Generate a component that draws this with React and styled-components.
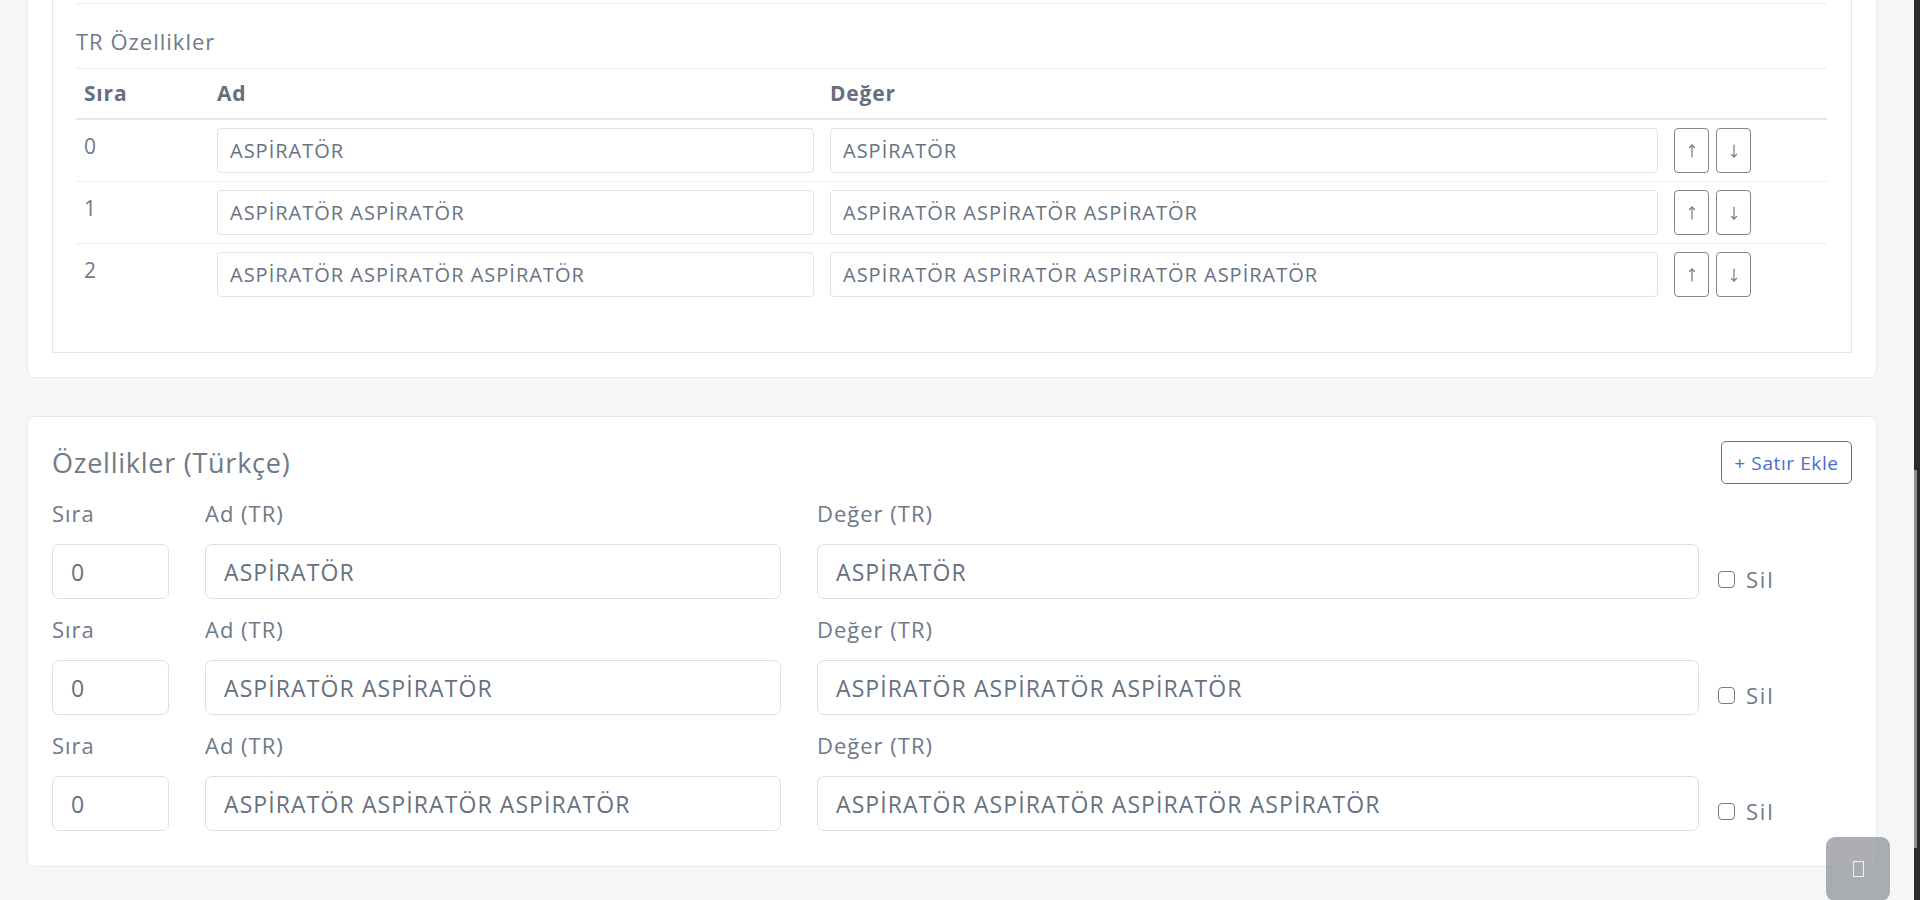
import React from 'react'
import styled, { createGlobalStyle } from 'styled-components'

const topRows = [
  { sira: 0, ad: 'ASPİRATÖR', deger: 'ASPİRATÖR' },
  { sira: 1, ad: 'ASPİRATÖR ASPİRATÖR', deger: 'ASPİRATÖR ASPİRATÖR ASPİRATÖR' },
  { sira: 2, ad: 'ASPİRATÖR ASPİRATÖR ASPİRATÖR', deger: 'ASPİRATÖR ASPİRATÖR ASPİRATÖR ASPİRATÖR' }
]

const trRows = [
  { sira: 0, ad: 'ASPİRATÖR', deger: 'ASPİRATÖR' },
  { sira: 0, ad: 'ASPİRATÖR ASPİRATÖR', deger: 'ASPİRATÖR ASPİRATÖR ASPİRATÖR' },
  { sira: 0, ad: 'ASPİRATÖR ASPİRATÖR ASPİRATÖR', deger: 'ASPİRATÖR ASPİRATÖR ASPİRATÖR ASPİRATÖR' }
]

const font = '"Open Sans", "Noto Sans", sans-serif'

function Arrow ({ down }) {
  return <svg width='10' height='16' viewBox='0 0 10 16' fill='none' stroke='#6f7782' strokeWidth='1.2' strokeLinecap='round'>
    {down
      ? <><line x1='5' y1='2' x2='5' y2='14' /><polyline points='2.5,11.5 5,14 7.5,11.5' /></>
      : <><line x1='5' y1='2' x2='5' y2='14' /><polyline points='2.5,4.5 5,2 7.5,4.5' /></>}
  </svg>
}

export default function App () {
  return <Shell>
    <GlobalStyle />
    <Main>
      <Card $cut>
        <InnerBox>
          <TopRule />
          <Caption>TR Özellikler</Caption>
          <TableHead>
            <Th>Sıra</Th>
            <Th>Ad</Th>
            <Th>Değer</Th>
            <Th />
          </TableHead>
          {topRows.map((r, i) => <TableRow key={i} $last={i === topRows.length - 1}>
            <Td $num>{r.sira}</Td>
            <Td><SmallInput defaultValue={r.ad} /></Td>
            <Td><SmallInput defaultValue={r.deger} /></Td>
            <Td>
              <MoveGroup>
                <MoveButton><Arrow /></MoveButton>
                <MoveButton><Arrow down /></MoveButton>
              </MoveGroup>
            </Td>
          </TableRow>)}
        </InnerBox>
      </Card>

      <Card>
        <CardHeader>
          <Title>Özellikler (Türkçe)</Title>
          <OutlineButton>+ Satır Ekle</OutlineButton>
        </CardHeader>
        <FieldRows>
          {trRows.map((r, i) => <FieldRow key={i}>
            <Field>
              <Label>Sıra</Label>
              <BigInput defaultValue={r.sira} />
            </Field>
            <Field>
              <Label>Ad (TR)</Label>
              <BigInput defaultValue={r.ad} />
            </Field>
            <Field>
              <Label>Değer (TR)</Label>
              <BigInput defaultValue={r.deger} />
            </Field>
            <CheckLine>
              <Check type='checkbox' />
              <span>Sil</span>
            </CheckLine>
          </FieldRow>)}
        </FieldRows>
      </Card>
    </Main>
    <ScrollTrack>
      <ScrollThumb />
    </ScrollTrack>
    <BackTop><Tofu /></BackTop>
  </Shell>
}

const GlobalStyle = createGlobalStyle`
  html, body {
    margin: 0;
    padding: 0;
    height: 100%;
    overflow: hidden;
  }
  body {
    background: #f5f6f8;
    font-family: ${font};
    color: #6c7786;
  }
  #root { height: 100%; }
`

const Shell = styled.div`
  display: flex;
  height: 900px;
`

const Main = styled.main`
  flex: 1;
  display: flex;
  flex-direction: column;
  gap: 38px;
  padding: 0 37px 0 27px;
  overflow: hidden;
`

const Card = styled.section`
  background: #fff;
  border: 1px solid #e7e9ed;
  border-radius: 7px;
  padding: 24px 24px 35px;
  ${({ $cut }) => $cut && `
    border-top: none;
    border-top-left-radius: 0;
    border-top-right-radius: 0;
    padding: 0 24px 24px;
  `}
`

const InnerBox = styled.div`
  border: 1px solid #e4e7eb;
  border-top: none;
  padding: 0 24px 47px 23px;
`

const TopRule = styled.div`
  height: 3px;
  border-bottom: 1px solid #eceef1;
`

const Caption = styled.div`
  font-size: 22px;
  line-height: 30px;
  letter-spacing: 1px;
  padding: 22px 0 12px;
  color: #6f7a88;
`

const grid = `
  display: grid;
  grid-template-columns: 133px 613px 844px 1fr;
`

const TableHead = styled.div`
  ${grid}
  border-top: 1px solid #eceef1;
  border-bottom: 2px solid #e3e6ea;
`

const Th = styled.div`
  padding: 9px 8px 10px;
  font-size: 21px;
  line-height: 30px;
  letter-spacing: 0.8px;
  font-weight: 700;
  color: #656f7d;
`

const TableRow = styled.div`
  ${grid}
  border-bottom: 1px solid #eceef1;
  ${({ $last }) => $last && 'border-bottom: none;'}
`

const Td = styled.div`
  padding: ${({ $num }) => $num ? '11px 8px 8px' : '8px'};
  font-size: 21px;
  line-height: 30px;
  color: #6f7a88;
`

const SmallInput = styled.input`
  box-sizing: border-box;
  display: block;
  width: 100%;
  height: 45px;
  padding: 0 12px;
  border: 1px solid #dfe3e8;
  border-radius: 4px;
  font: 20px ${font};
  letter-spacing: 1px;
  color: #687383;
  background: #fff;
  outline: none;
`

const MoveGroup = styled.div`
  display: flex;
  gap: 7px;
`

const MoveButton = styled.button`
  box-sizing: border-box;
  width: 35px;
  height: 45px;
  padding: 0;
  display: flex;
  align-items: center;
  justify-content: center;
  background: #fff;
  border: 1px solid #7f8690;
  border-radius: 4px;
`

const CardHeader = styled.div`
  display: flex;
  align-items: center;
  justify-content: space-between;
  margin-bottom: 14px;
`

const Title = styled.h4`
  margin: 0;
  font-size: 27px;
  line-height: 31px;
  letter-spacing: 0.75px;
  font-weight: 400;
  color: #6f7a88;
`

const OutlineButton = styled.button`
  box-sizing: border-box;
  width: 131px;
  height: 43px;
  padding: 0;
  background: #fff;
  border: 1px solid #4a6bd6;
  border-radius: 5px;
  color: #4a6bd6;
  font: 19px ${font};
  letter-spacing: 0.6px;
`

const FieldRows = styled.div`
  display: flex;
  flex-direction: column;
  gap: 15px;
`

const FieldRow = styled.div`
  display: grid;
  grid-template-columns: 117px 576px 882px 1fr;
  column-gap: 36px;
`

const Field = styled.div`
  display: flex;
  flex-direction: column;
  gap: 16px;
`

const Label = styled.label`
  font-size: 22px;
  line-height: 30px;
  letter-spacing: 1px;
  color: #6f7a88;
`

const BigInput = styled.input`
  box-sizing: border-box;
  width: 100%;
  height: 55px;
  padding: 0 18px;
  border: 1px solid #dce0e5;
  border-radius: 7px;
  font: 23px ${font};
  letter-spacing: 1.1px;
  color: #66717f;
  background: #fff;
  outline: none;
`

const CheckLine = styled.label`
  align-self: end;
  margin: 0 0 10px -17px;
  display: flex;
  align-items: center;
  gap: 11px;
  font-size: 22px;
  line-height: 20px;
  letter-spacing: 1.8px;
  color: #6f7a88;
`

const Check = styled.input`
  appearance: none;
  margin: 0;
  width: 17px;
  height: 17px;
  border: 1.5px solid #737b86;
  border-radius: 4px;
  background: #fff;
`

const ScrollTrack = styled.div`
  width: 6px;
  background: #2b2b2b;
  padding-top: 470px;
  box-sizing: border-box;
`

const ScrollThumb = styled.div`
  width: 3px;
  height: 378px;
  background: #8e8e8e;
`

const BackTop = styled.div`
  position: fixed;
  right: 30px;
  bottom: -1px;
  width: 64px;
  height: 64px;
  border-radius: 9px;
  background: rgba(140, 143, 150, 0.72);
  display: flex;
  align-items: center;
  justify-content: center;
`

const Tofu = styled.span`
  width: 9px;
  height: 14px;
  border: 1.5px solid #f2f3f5;
`
